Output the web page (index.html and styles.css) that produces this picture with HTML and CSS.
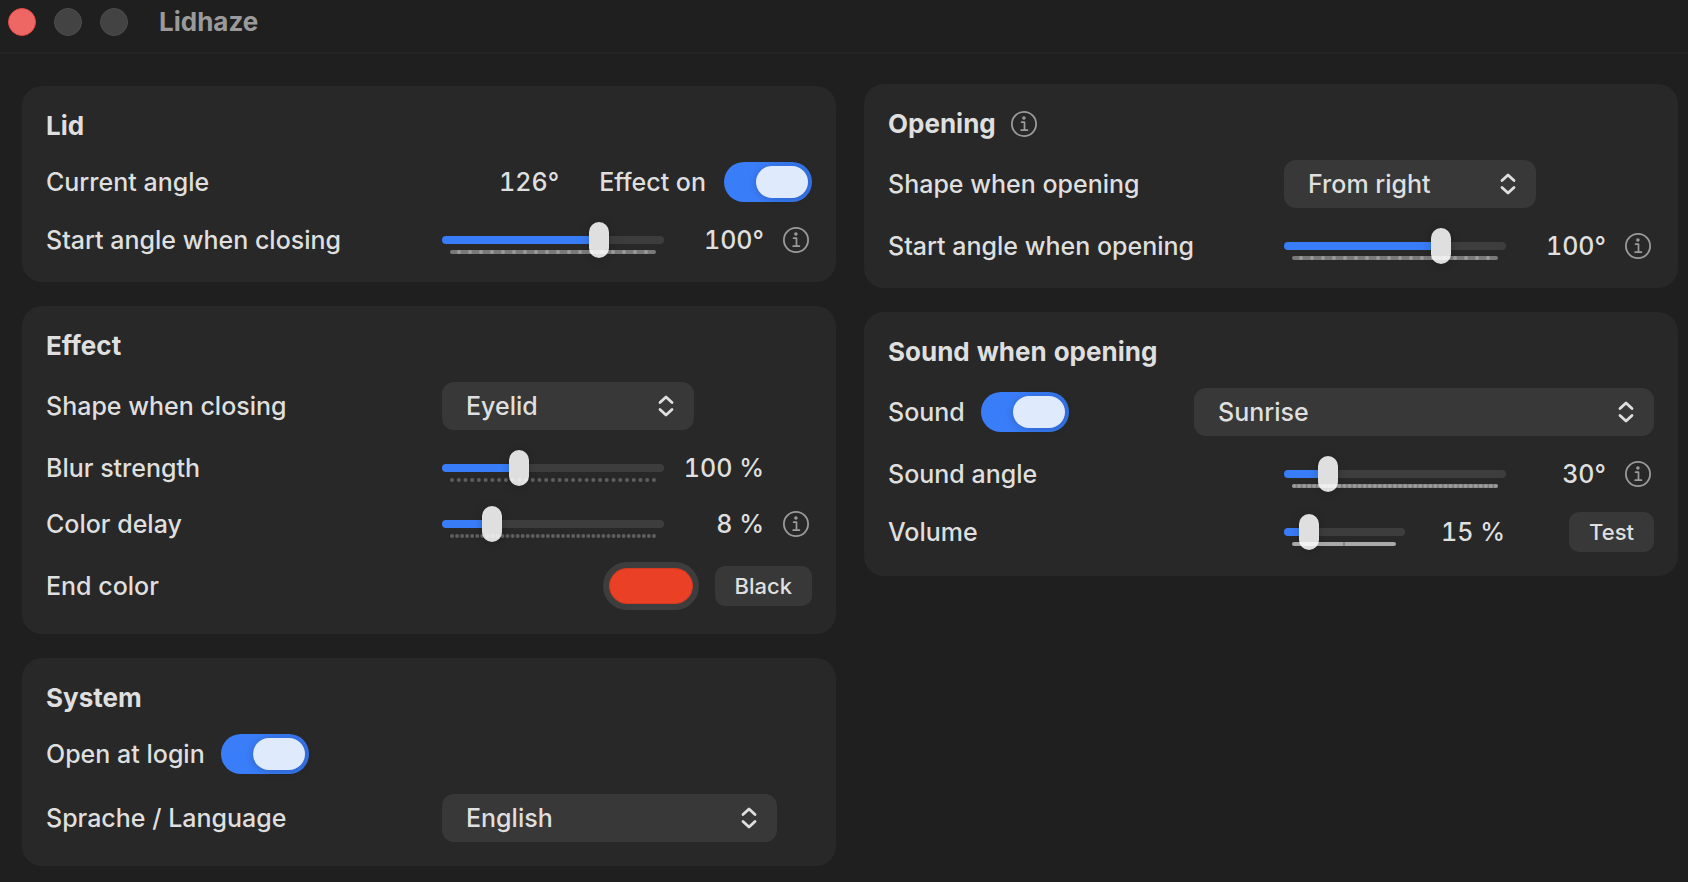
FILE: index.html
```html
<!DOCTYPE html>
<html lang="en">
<head>
<meta charset="utf-8">
<title>Lidhaze</title>
<link rel="stylesheet" href="styles.css">
</head>
<body>
<svg class="defs" aria-hidden="true">
  <defs>
    <symbol id="info" viewBox="0 0 26 26">
      <circle cx="13" cy="13" r="12.1" fill="none" stroke="currentColor" stroke-width="1.8"/>
      <circle cx="12.9" cy="7" r="1.8" fill="currentColor"/>
      <path d="M10.6 11.2h2.9v8M10.2 19.2h6.2" fill="none" stroke="currentColor" stroke-width="1.7" stroke-linecap="round" stroke-linejoin="round"/>
    </symbol>
    <symbol id="updown" viewBox="0 0 16 22">
      <path d="M2 7.6 8 2l6 5.600M2 14.400 8 20l6-5.600" fill="none" stroke="currentColor" stroke-width="2.800" stroke-linecap="round" stroke-linejoin="round"/>
    </symbol>
  </defs>
</svg>

<header class="titlebar">
  <div class="lights">
    <button class="light light-close" aria-label="Close"></button>
    <button class="light" aria-label="Minimize"></button>
    <button class="light" aria-label="Zoom"></button>
  </div>
  <h1 class="window-title">Lidhaze</h1>
</header>

<main class="settings">
  <div class="column">
    <section class="card">
      <h2 class="card-title">Lid</h2>
      <div class="row row-switch">
        <span class="label">Current angle</span>
        <output class="reading">126°</output>
        <label class="switch-label" for="effect-on">Effect on</label>
        <input class="switch" type="checkbox" role="switch" id="effect-on" checked>
      </div>
      <div class="row">
        <label class="label" for="close-angle">Start angle when closing</label>
        <div class="slider" style="--value: 0.728">
          <input class="range" type="range" id="close-angle" min="0" max="1000" value="728">
          <svg class="ticks" viewBox="0 0 206 4"><path class="ticks-solid" d="M2 2H204"/><path class="ticks-dots" pathLength="202" stroke-dasharray="0 11" stroke-dashoffset="-7" d="M2 2H204"/></svg>
        </div>
        <output class="value">100°</output>
        <button class="info" aria-label="About the closing angle"><svg class="info-icon"><use href="#info"/></svg></button>
      </div>
    </section>

    <section class="card">
      <h2 class="card-title">Effect</h2>
      <div class="row">
        <label class="label" for="close-shape">Shape when closing</label>
        <div class="select-slot">
          <div class="select-box select-medium">
            <select class="select" id="close-shape"><option>Eyelid</option></select>
            <svg class="select-icon"><use href="#updown"/></svg>
          </div>
        </div>
      </div>
      <div class="row">
        <label class="label" for="blur">Blur strength</label>
        <div class="slider" style="--value: 0.332">
          <input class="range" type="range" id="blur" min="0" max="1000" value="332">
          <svg class="ticks" viewBox="0 0 206 4"><path class="ticks-single" pathLength="30.01" stroke-dasharray="0 1" d="M2 2H204"/></svg>
        </div>
        <output class="value">100 %</output>
        <span class="info"></span>
      </div>
      <div class="row">
        <label class="label" for="delay">Color delay</label>
        <div class="slider" style="--value: 0.198">
          <input class="range" type="range" id="delay" min="0" max="1000" value="198">
          <svg class="ticks" viewBox="0 0 206 4"><path class="ticks-single" pathLength="40.01" stroke-dasharray="0 1" d="M2 2H204"/></svg>
        </div>
        <output class="value">8 %</output>
        <button class="info" aria-label="About the color delay"><svg class="info-icon"><use href="#info"/></svg></button>
      </div>
      <div class="row">
        <label class="label" for="end-color">End color</label>
        <div class="color-controls">
          <input class="color-well" type="color" id="end-color" value="#ea4025">
          <button class="button">Black</button>
        </div>
      </div>
    </section>

    <section class="card">
      <h2 class="card-title">System</h2>
      <div class="row row-inline">
        <label for="login">Open at login</label>
        <input class="switch" type="checkbox" role="switch" id="login" checked>
      </div>
      <div class="row">
        <label class="label" for="language">Sprache / Language</label>
        <div class="select-slot">
          <div class="select-box select-wide">
            <select class="select" id="language"><option>English</option></select>
            <svg class="select-icon"><use href="#updown"/></svg>
          </div>
        </div>
      </div>
    </section>
  </div>

  <div class="column column-right">
    <section class="card">
      <div class="card-heading">
        <h2 class="card-title">Opening</h2>
        <button class="info" aria-label="About opening"><svg class="info-icon"><use href="#info"/></svg></button>
      </div>
      <div class="row">
        <label class="label" for="open-shape">Shape when opening</label>
        <div class="select-slot">
          <div class="select-box select-medium">
            <select class="select" id="open-shape"><option>From right</option></select>
            <svg class="select-icon"><use href="#updown"/></svg>
          </div>
        </div>
      </div>
      <div class="row">
        <label class="label" for="open-angle">Start angle when opening</label>
        <div class="slider" style="--value: 0.728">
          <input class="range" type="range" id="open-angle" min="0" max="1000" value="728">
          <svg class="ticks" viewBox="0 0 206 4"><path class="ticks-solid" d="M2 2H204"/><path class="ticks-dots" pathLength="202" stroke-dasharray="0 11" stroke-dashoffset="-7" d="M2 2H204"/></svg>
        </div>
        <output class="value">100°</output>
        <button class="info" aria-label="About the opening angle"><svg class="info-icon"><use href="#info"/></svg></button>
      </div>
    </section>

    <section class="card">
      <h2 class="card-title">Sound when opening</h2>
      <div class="row row-inline">
        <label for="sound">Sound</label>
        <input class="switch" type="checkbox" role="switch" id="sound" checked>
        <div class="select-box select-full">
          <select class="select" aria-label="Sound name"><option>Sunrise</option></select>
          <svg class="select-icon"><use href="#updown"/></svg>
        </div>
      </div>
      <div class="row">
        <label class="label" for="sound-angle">Sound angle</label>
        <div class="slider" style="--value: 0.168">
          <input class="range" type="range" id="sound-angle" min="0" max="1000" value="168">
          <svg class="ticks" viewBox="0 0 206 4"><path class="ticks-solid" d="M2 2H204"/><path class="ticks-dots" pathLength="40.01" stroke-dasharray="0 1" d="M2 2H204"/></svg>
        </div>
        <output class="value">30°</output>
        <button class="info" aria-label="About the sound angle"><svg class="info-icon"><use href="#info"/></svg></button>
      </div>
      <div class="row">
        <label class="label" for="volume">Volume</label>
        <div class="volume-controls">
          <div class="slider slider-short" style="--value: 0.149">
            <input class="range" type="range" id="volume" min="0" max="1000" value="149">
            <svg class="ticks" viewBox="0 0 104 4"><path class="ticks-dense" d="M2 2H102"/><path class="ticks-gap" d="M52 0V4"/></svg>
          </div>
          <output class="value">15 %</output>
          <button class="button button-end">Test</button>
        </div>
      </div>
    </section>
  </div>
</main>
</body>
</html>
```

FILE: styles.css
```css
* {
  box-sizing: border-box;
}

body {
  margin: 0;
  min-height: 100vh;
  background: #1f1f1f;
  color: #dfdfdf;
  font-family: Inter, "Liberation Sans", sans-serif;
  font-size: 25px;
  font-weight: 500;
  font-variant-numeric: tabular-nums;
  line-height: 32px;
}

h1,
h2 {
  margin: 0;
  font-size: 26px;
  font-weight: 700;
}

button,
input,
select {
  margin: 0;
  padding: 0;
  border: 0;
  color: inherit;
  font: inherit;
}

.defs {
  display: none;
}

.titlebar {
  display: flex;
  align-items: center;
  gap: 31px;
  height: 54px;
  padding: 0 8px 8px;
  border-bottom: 2px solid #242424;
}

.lights {
  display: flex;
  gap: 18px;
}

.light {
  width: 28px;
  height: 28px;
  border: 1px solid #4d4d4d;
  border-radius: 50%;
  background: #434343;
}

.light-close {
  border-color: #e04a48;
  background: #ef6765;
}

.window-title {
  color: #9a9a9a;
}

.settings {
  display: grid;
  grid-template-columns: 1fr 1fr;
  gap: 28px;
  padding: 32px 10px 16px 22px;
}

.column {
  display: flex;
  flex-direction: column;
  gap: 24px;
}

.column-right {
  margin-top: -2px;
}

.card {
  display: flex;
  flex-direction: column;
  gap: 20px;
  padding: 24px;
  border-radius: 20px;
  background: #282828;
}

.card-heading {
  display: flex;
  gap: 12px;
}

.row {
  display: flex;
  align-items: center;
}

.row-inline {
  gap: 16px;
}

.label {
  flex: 1;
  white-space: nowrap;
}

.reading {
  margin-right: 40px;
}

.switch-label {
  margin-right: 18px;
}

.switch {
  display: flex;
  justify-content: flex-end;
  width: 88px;
  height: 40px;
  padding: 4px;
  border-radius: 20px;
  background: linear-gradient(90deg, #3a7df8 50%, #3474ea);
  appearance: none;
}

.switch::before {
  content: "";
  width: 52px;
  height: 32px;
  border-radius: 16px;
  background: #e0eafd;
  box-shadow: 0 1px 8px rgb(0 0 0 / 20%);
}

.slider {
  position: relative;
  width: 222px;
  height: 36px;
}

.slider-short {
  width: 121px;
}

.range {
  display: block;
  width: 100%;
  height: 36px;
  background: transparent;
  appearance: none;
}

.range::-webkit-slider-runnable-track {
  height: 8px;
  border-radius: 4px;
  background: linear-gradient(90deg, #397cf7 calc(10px + (100% - 20px) * var(--value)), #3d3d3d 0);
}

.range::-webkit-slider-thumb {
  width: 20px;
  height: 36px;
  margin-top: -14px;
  border-radius: 10px;
  background: #dfdfdf;
  box-shadow: 0 1px 8px rgb(0 0 0 / 20%);
  appearance: none;
}

.ticks {
  position: absolute;
  right: 8px;
  bottom: 4px;
  left: 8px;
  height: 4px;
  pointer-events: none;
}

.ticks path {
  stroke: rgb(255 255 255 / 25%);
  stroke-width: 4px;
  stroke-linecap: round;
}

.ticks .ticks-solid {
  stroke: rgb(255 255 255 / 38%);
}

.ticks .ticks-dense {
  stroke: rgb(255 255 255 / 60%);
}

.ticks .ticks-gap {
  stroke: rgb(0 0 0 / 20%);
  stroke-width: 2px;
  stroke-linecap: butt;
}

.value {
  width: 100px;
  text-align: right;
  white-space: nowrap;
}

.info {
  display: grid;
  place-items: center;
  width: 32px;
  height: 32px;
  background: none;
  color: #9b9b9b;
}

.row .info {
  margin-left: 16px;
}

.info-icon {
  width: 26px;
  height: 26px;
}

.select-slot {
  width: 370px;
}

.select-box {
  position: relative;
  height: 48px;
}

.select-medium {
  width: 252px;
}

.select-wide {
  width: 335px;
}

.select-full {
  width: 460px;
  margin-left: auto;
}

.select {
  width: 100%;
  height: 100%;
  padding: 0 60px 0 24px;
  border-radius: 12px;
  background: #383838;
  appearance: none;
}

.select-icon {
  position: absolute;
  top: 13px;
  right: 20px;
  width: 16px;
  height: 22px;
  pointer-events: none;
}

.color-controls {
  display: flex;
  align-items: center;
  gap: 16px;
}

.color-well {
  width: 96px;
  height: 48px;
  padding: 6px;
  border-radius: 24px;
  background: #3d3d3d;
  appearance: none;
}

.color-well::-webkit-color-swatch-wrapper {
  padding: 0;
}

.color-well::-webkit-color-swatch {
  border: 1px solid #d23a22;
  border-radius: 18px;
}

.button {
  height: 40px;
  padding: 0 20px;
  border-radius: 10px;
  background: #383838;
  font-size: 22px;
}

.volume-controls {
  display: flex;
  align-items: center;
  width: 370px;
}

.button-end {
  margin-left: auto;
}
```
